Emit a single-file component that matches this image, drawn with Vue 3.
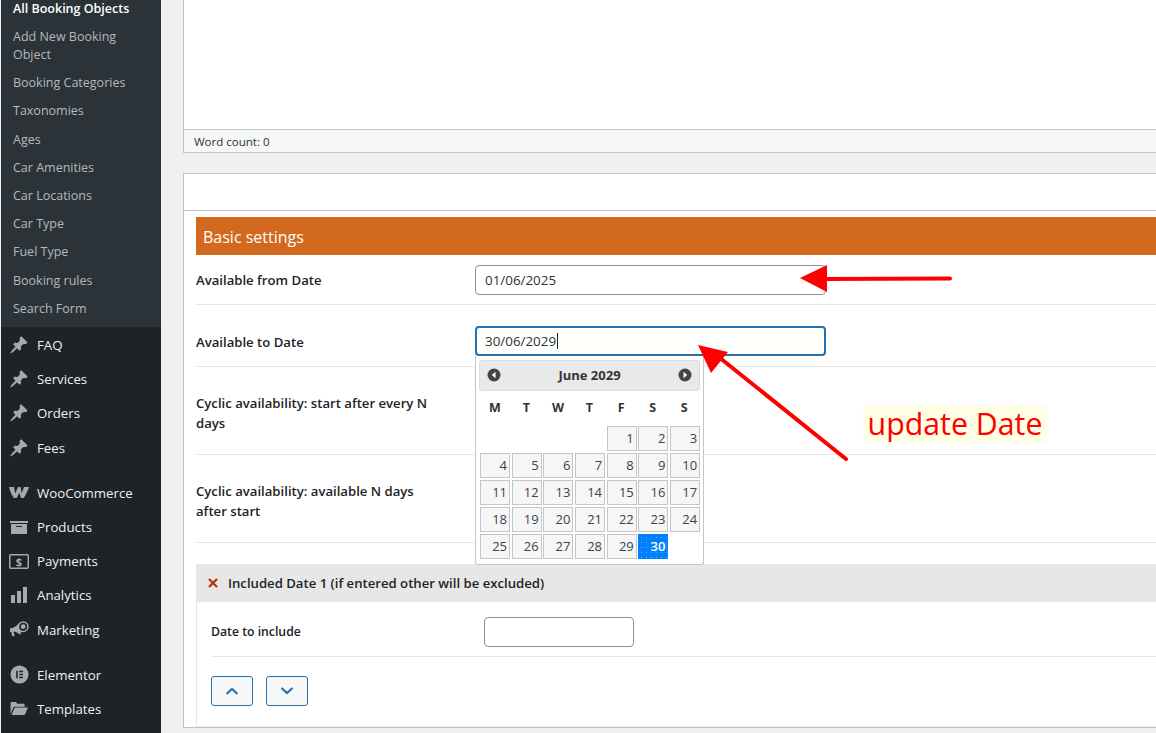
<script setup>
const subItems = [
  { label: 'All Booking Objects', current: true },
  { label: 'Add New Booking Object' },
  { label: 'Booking Categories' },
  { label: 'Taxonomies' },
  { label: 'Ages' },
  { label: 'Car Amenities' },
  { label: 'Car Locations' },
  { label: 'Car Type' },
  { label: 'Fuel Type' },
  { label: 'Booking rules' },
  { label: 'Search Form' }
]
const groups = [
  [
    { label: 'FAQ', icon: 'pin' },
    { label: 'Services', icon: 'pin' },
    { label: 'Orders', icon: 'pin' },
    { label: 'Fees', icon: 'pin' }
  ],
  [
    { label: 'WooCommerce', icon: 'woo' },
    { label: 'Products', icon: 'archive' },
    { label: 'Payments', icon: 'pay' },
    { label: 'Analytics', icon: 'bars' },
    { label: 'Marketing', icon: 'mega' }
  ],
  [
    { label: 'Elementor', icon: 'elementor' },
    { label: 'Templates', icon: 'folder' }
  ]
]
const weekdays = ['M', 'T', 'W', 'T', 'F', 'S', 'S']
const blanks = [1, 2, 3, 4]
const days = Array.from({ length: 30 }, (_, i) => i + 1)
</script>

<template>
  <div class="page">
    <aside class="sidebar">
      <ul class="submenu">
        <li v-for="item in subItems" :key="item.label" :class="{ current: item.current }">{{ item.label }}</li>
      </ul>
      <div class="menu">
        <ul v-for="(group, g) in groups" :key="g" class="group">
          <li v-for="item in group" :key="item.label">
            <span class="icon">
              <svg v-if="item.icon === 'pin'" viewBox="0 0 20 20" width="20" height="20"><path d="M10.44 3.02l1.82-1.82 6.36 6.35-1.83 1.82c-1.05-.68-2.48-.57-3.41.36l-.75.75c-.92.93-1.04 2.35-.35 3.41l-1.83 1.82-2.41-2.41-2.8 2.79c-.42.42-3.38 2.71-3.8 2.29s1.86-3.39 2.28-3.81l2.79-2.79L4.1 9.36l1.83-1.82c1.05.69 2.48.57 3.4-.36l.75-.75c.93-.92 1.05-2.35.36-3.41z" /></svg>
              <svg v-else-if="item.icon === 'woo'" viewBox="0 0 20 11" width="20" height="11"><path d="M0 0h5l1.200 6.500L9 0h2.600l1 6.500L15 0h5c-1.200 3.500-3 7.500-5.200 11h-2.900l-1.500-5.300L7.700 11H4.700C2.800 8 1 4 0 0z" /></svg>
              <svg v-else-if="item.icon === 'archive'" viewBox="0 0 20 20" width="20" height="20"><path d="M19 4v2H1V4h18zM2 7h16v10H2V7zm11 3V9H7v1h6z" /></svg>
              <svg v-else-if="item.icon === 'pay'" viewBox="0 0 20 15" width="20" height="15"><rect x=".75" y=".75" width="18.500" height="13.500" rx="1" fill="none" stroke="#a7aaad" stroke-width="1.500" /><text x="10" y="12" text-anchor="middle" class="dollar">$</text></svg>
              <svg v-else-if="item.icon === 'bars'" class="bars" viewBox="0 0 16 16" width="16" height="16"><path d="M0 8h4v8H0zM6 4h4v12H6zM12 0h4v16h-4z" /></svg>
              <svg v-else-if="item.icon === 'mega'" viewBox="0 0 20 20" width="20" height="20"><path d="M1 8.500c3-.3 6-1.800 9-5.500 1.500 2.500 2.200 5 2.200 7.700 0 1.500-.2 2.800-.7 4-2.500-2-5-3.100-6.900-3.300l1 4.800H3.200L2.300 12H1z" /><circle cx="14.200" cy="6.700" r="5.500" /><circle cx="14.200" cy="6.700" r="4" fill="#1d2327" /><circle cx="14.200" cy="6.700" r="2.400" /></svg>
              <svg v-else-if="item.icon === 'elementor'" class="elementor" viewBox="0 0 20 20" width="19" height="19"><path fill-rule="evenodd" d="M10 .5a9.500 9.500 0 1 0 0 19 9.500 9.500 0 0 0 0-19zM6.500 6h1.600v8H6.500zm3.200 0h4v1.600h-4zm0 3.200h4v1.600h-4zm0 3.200h4V14h-4z" /></svg>
              <svg v-else class="folder" viewBox="0 0 20 16" width="19" height="15"><path d="M.500 14V2.500c0-.8.600-1.500 1.400-1.500h4.300l1.300 1.800h6.700c.8 0 1.300.6 1.300 1.400V6H5.200C4.300 6 3.600 6.500 3.300 7.300zM1.500 15l3-7.200c.2-.5.600-.8 1.200-.8h13.300l-3 7.200c-.2.500-.7.800-1.300.8z" /></svg>
            </span>
            <span>{{ item.label }}</span>
          </li>
        </ul>
      </div>
    </aside>

    <main class="main">
      <section class="editor-box">
        <div class="editor-area"></div>
        <div class="status">Word count: 0</div>
      </section>

      <section class="settings-box">
        <div class="box-head"></div>
        <div class="box-inner">
          <h2 class="band">Basic settings</h2>

          <div class="row row-first">
            <label class="label">Available from Date</label>
            <input class="field" type="text" value="01/06/2025" />
          </div>
          <div class="row row-second">
            <label class="label">Available to Date</label>
            <div class="field field-focus">30/06/2029<i class="caret"></i></div>
          </div>
          <div class="row row-tall">
            <label class="label label-wrap">Cyclic availability: start after every N days</label>
          </div>
          <div class="row row-tall">
            <label class="label label-wrap">Cyclic availability: available N days after start</label>
          </div>

          <div class="repeater">
            <div class="rep-head">
              <svg class="cross" viewBox="0 0 12 12" width="12" height="12"><path d="M2 2l8 8M10 2l-8 8" stroke="#b32d0e" stroke-width="2.200" fill="none" /></svg>
              <span>Included Date 1 (if entered other will be excluded)</span>
            </div>
            <div class="rep-body">
              <div class="rep-row">
                <label class="label rep-label">Date to include</label>
                <input class="small-field" type="text" />
              </div>
              <div class="btns">
                <button class="btn" type="button"><svg viewBox="0 0 14 8" width="14" height="8"><path d="M1.500 7L7 2l5.500 5" fill="none" stroke="#2271b1" stroke-width="2.200" /></svg></button>
                <button class="btn" type="button"><svg viewBox="0 0 14 8" width="14" height="8"><path d="M1.500 1L7 6l5.500-5" fill="none" stroke="#2271b1" stroke-width="2.200" /></svg></button>
              </div>
            </div>
          </div>
        </div>
      </section>
    </main>

    <div class="calendar">
      <div class="cal-head">
        <svg viewBox="0 0 14 14" width="14" height="14"><circle cx="7" cy="7" r="6.500" fill="#454545" /><path d="M8.500 3.800v6.400L4.800 7z" fill="#fff" /></svg>
        <b>June 2029</b>
        <svg viewBox="0 0 14 14" width="14" height="14"><circle cx="7" cy="7" r="6.500" fill="#454545" /><path d="M5.500 3.800v6.400L9.200 7z" fill="#fff" /></svg>
      </div>
      <div class="cal-week">
        <b v-for="(d, i) in weekdays" :key="i">{{ d }}</b>
      </div>
      <div class="cal-grid">
        <span v-for="b in blanks" :key="'b' + b"></span>
        <a v-for="d in days" :key="d" class="day" :class="{ active: d === 30 }">{{ d }}</a>
      </div>
    </div>

    <svg class="arrows" width="1156" height="733" viewBox="0 0 1156 733">
      <path d="M950 278.500L822 279" stroke="#fe0000" stroke-width="4" stroke-linecap="round" fill="none" />
      <path d="M800 278L827 265L827 292z" fill="#fe0000" />
      <path d="M846 459L715 354" stroke="#fe0000" stroke-width="4" stroke-linecap="round" fill="none" />
      <path d="M698 345L728 352L711 373z" fill="#fe0000" />
    </svg>
    <div class="note">update Date</div>
  </div>
</template>

<style scoped>
.page {
  position: relative;
  display: flex;
  width: 1156px;
  height: 733px;
  overflow: hidden;
  background: #f0f0f1;
  color: #1d2327;
  font-family: "Open Sans", "Noto Sans", sans-serif;
  font-size: 13px;
}
ul { list-style: none; margin: 0; padding: 0; }

.sidebar {
  flex: 0 0 160px;
  border-left: 1px solid #f0f0f1;
  background: #1d2327;
}
.submenu {
  display: flow-root;
  background: #2c3338;
  height: 327px;
  padding-left: 12px;
  padding-right: 10px;
  font-size: 12.5px;
  line-height: 18px;
  color: #b4b9be;
  box-sizing: border-box;
}
.submenu li { padding: 5px 0 5.200px; }
.submenu li:first-child { margin-top: -5.200px; }
.submenu .current { color: #fff; font-weight: 600; }

.menu { padding-top: 1px; }
.group { margin-bottom: 11px; }
.group li {
  display: flex;
  align-items: center;
  height: 34.200px;
  font-size: 13.250px;
  color: #f0f0f1;
}
.icon {
  flex: 0 0 36px;
  display: flex;
  justify-content: flex-start;
  padding-left: 8px;
  box-sizing: border-box;
}
.icon svg { fill: #a7aaad; display: block; }
.icon .bars { margin-left: 2px; }
.icon .elementor,
.icon .folder { margin-left: 1px; }
.dollar { font: 700 11px "Open Sans", sans-serif; fill: #a7aaad; }

.main {
  flex: 1;
  min-width: 0;
  padding-left: 22px;
}
.editor-box {
  margin-right: -40px;
  border: 1px solid #c3c4c7;
  border-top: 0;
  background: #fff;
}
.editor-area { height: 129px; }
.status {
  height: 23px;
  box-sizing: border-box;
  padding: 3px 10px 0;
  border-top: 1px solid #c3c4c7;
  background: #f6f7f7;
  font-size: 11.500px;
  line-height: 18px;
  color: #2c3338;
}
.settings-box {
  margin: 20px -40px 0 0;
  border: 1px solid #c3c4c7;
  background: #fff;
}
.box-head {
  height: 36px;
  border-bottom: 1px solid #c3c4c7;
}
.box-inner { padding: 6px 12px 0; }
.band {
  margin: 0;
  height: 38px;
  padding-left: 7px;
  background: #d2691e;
  color: #fff;
  font-size: 16px;
  font-weight: 400;
  line-height: 40px;
}
.row {
  display: flex;
  align-items: center;
  border-bottom: 1px solid #e8e8e9;
  box-sizing: border-box;
}
.row-first { height: 50px; }
.row-second { height: 62px; padding-top: 11px; }
.row-second .label { padding-top: 2px; box-sizing: border-box; }
.row-tall { height: 88px; padding-top: 4px; }
.label {
  flex: 0 0 279px;
  font-weight: 600;
  font-size: 13.150px;
  line-height: 20px;
}
.label-wrap { padding-right: 40px; box-sizing: border-box; }
.field {
  width: 351px;
  height: 30px;
  box-sizing: border-box;
  padding: 0 9px;
  border: 1px solid #8c8f94;
  border-radius: 4px;
  background: #fff;
  color: #2c3338;
  font: 13.400px/28px "Open Sans", sans-serif;
  outline: 0;
}
.field-focus {
  border: 2px solid #2271b1;
  background: #fffffb;
  padding: 0 8px;
  line-height: 26px;
}
.caret {
  display: inline-block;
  width: 1px;
  height: 16px;
  margin-left: 1px;
  background: #1d2327;
  vertical-align: -3px;
}
.repeater {
  margin-top: 21px;
  border: 1px solid #e8e8e9;
  border-top: 0;
}
.rep-head {
  display: flex;
  align-items: center;
  gap: 9px;
  height: 38px;
  padding-left: 11px;
  margin-left: -1px;
  background: #e7e7e7;
  font-weight: 600;
  font-size: 13.150px;
}
.rep-body { padding: 0 14px; height: 124px; }
.rep-row {
  display: flex;
  align-items: center;
  height: 55px;
  padding-top: 6px;
  border-bottom: 1px solid #e8e8e9;
  box-sizing: border-box;
}
.rep-label { flex: 0 0 273px; font-size: 12.250px; }
.small-field {
  width: 150px;
  height: 30px;
  box-sizing: border-box;
  border: 1px solid #8c8f94;
  border-radius: 4px;
  background: #fff;
}
.btns { display: flex; gap: 13px; padding-top: 19px; }
.btn {
  display: flex;
  align-items: center;
  justify-content: center;
  width: 42px;
  height: 30px;
  padding: 0;
  border: 1px solid #2271b1;
  border-radius: 3px;
  background: #f6f7f7;
}

.calendar {
  position: absolute;
  left: 475px;
  top: 356px;
  width: 229px;
  height: 209px;
  box-sizing: border-box;
  padding: 4px 3px 0;
  border: 1px solid #c5c5c5;
  border-top: 0;
  border-radius: 0 0 3px 3px;
  background: #fff;
  color: #333;
}
.cal-head {
  display: flex;
  align-items: center;
  justify-content: space-between;
  height: 31px;
  padding: 0 7px 1px 7px;
  border: 1px solid #ddd;
  border-radius: 3px;
  box-sizing: border-box;
  background: #e9e9e9;
  font-size: 13px;
}
.cal-week {
  display: grid;
  grid-template-columns: repeat(7, 1fr);
  height: 35px;
  text-align: center;
  line-height: 34px;
  font-size: 12.500px;
  color: #333;
}
.cal-grid {
  display: grid;
  grid-template-columns: repeat(7, 30px);
  grid-auto-rows: 25px;
  gap: 2px 1.700px;
  margin-left: 1px;
}
.day {
  box-sizing: border-box;
  border: 1px solid #c5c5c5;
  background: #f6f6f6;
  padding-right: 2px;
  text-align: right;
  font-size: 13px;
  line-height: 23px;
  color: #3c434a;
}
.day.active {
  border-color: #007fff;
  background-color: #007fff;
  background-image: radial-gradient(rgba(255, 255, 255, .35) .5px, transparent .8px);
  background-size: 5px 5px;
  color: #fff;
  font-weight: 600;
}

.arrows { position: absolute; left: 0; top: 0; pointer-events: none; }
.note {
  position: absolute;
  left: 863px;
  top: 405px;
  width: 184px;
  height: 38px;
  background: #ffffe5;
  color: #fe0000;
  font: 30.300px/38px "Open Sans", sans-serif;
  text-align: center;
  white-space: nowrap;
}
</style>
